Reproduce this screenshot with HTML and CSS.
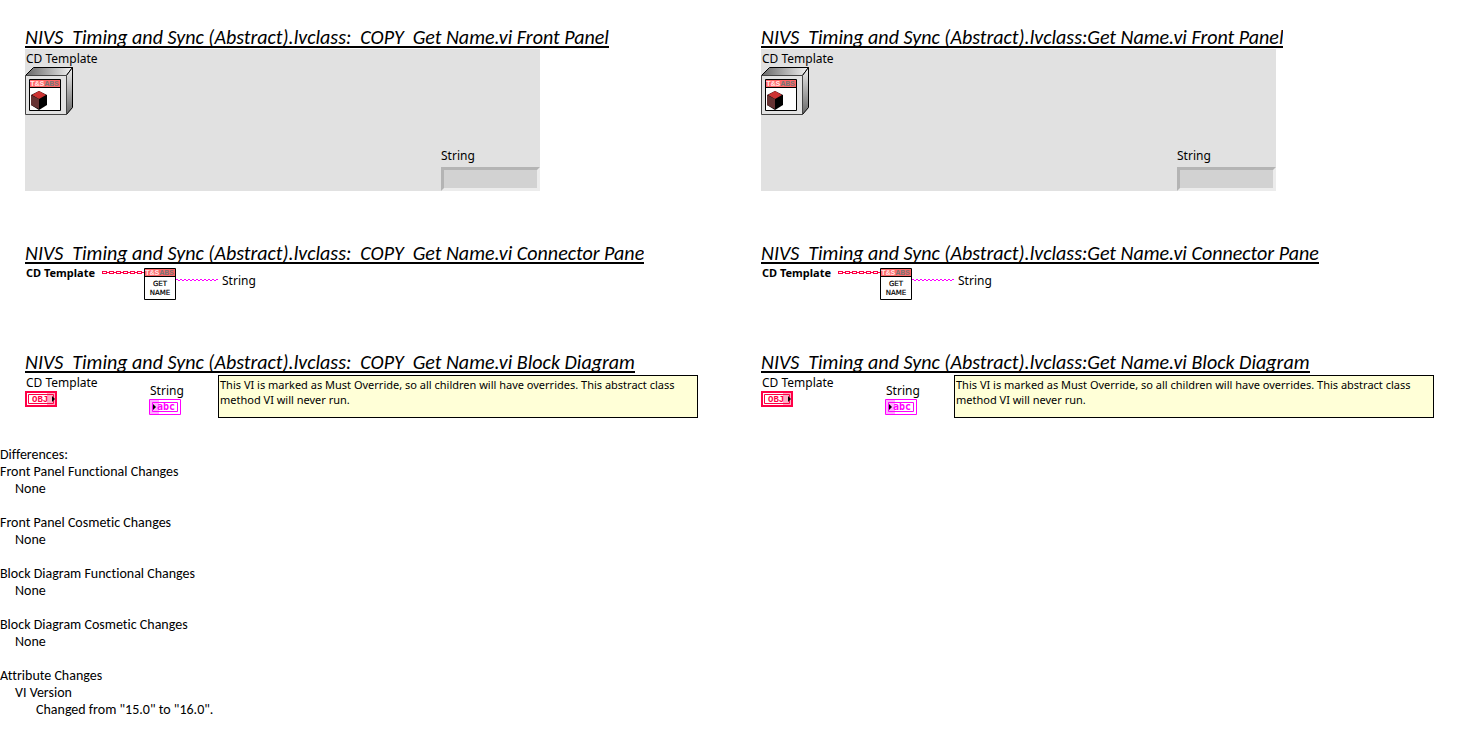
FILE: index.html
```html
<!DOCTYPE html>
<html lang="en">
<head>
<meta charset="utf-8">
<title>VI Comparison Report</title>
<link rel="stylesheet" href="styles.css">
</head>
<body>
<svg class="defs" aria-hidden="true">
  <defs>
    <linearGradient id="top" x1="0" x2="1"><stop offset="0" stop-color="#666"/><stop offset="1" stop-color="#f4f4f4"/></linearGradient>
    <linearGradient id="side" x1="0" y1="0" x2="0" y2="1"><stop offset="0" stop-color="#eee"/><stop offset="1" stop-color="#666"/></linearGradient>
    <pattern id="links" width="7" height="3" patternUnits="userSpaceOnUse"><path d="M0 .5H5M0 2.5H5M.5 0V3M4.5 0V3M5 1.5H7" stroke="#ff0046"/></pattern>
    <pattern id="wave" width="4" height="2" patternUnits="userSpaceOnUse"><path d="M0 .5H2M2 1.5H4" stroke="#ff00ff"/></pattern>
    <symbol id="object" viewBox="0 0 48 48">
      <path d="M.5 8.5 8.5.5H47.5L41.5 8.5Z" fill="url(#top)" stroke="#000"/>
      <path d="M41.5 8.5 47.5.5V40.5L41.5 47.5Z" fill="url(#side)" stroke="#000"/>
      <path d="M.5 8.5H41.5V47.5H.5Z" fill="#e2e2e2" stroke="#444"/>
      <path d="M4.500 12.5H35.500V43.500H4.500Z" fill="#fff" stroke="#000"/>
      <path d="M5 13H35V20H5Z" fill="#ff6666"/>
      <path d="M5 20.500H35" stroke="#000"/>
      <text x="5" y="19" class="pixel-tag">T&amp;S<tspan class="pixel-grey">ABS</tspan></text>
      <path d="M6 28 14 24 22 28V38L14 43 6 38Z" fill="#000"/>
      <path d="M7 28 14 24 21 28 14 32Z" fill="#cc3333"/>
      <path d="M6 28 14 32V42L6 38Z" fill="#663333"/>
    </symbol>
    <symbol id="getname" viewBox="0 0 32 32">
      <path d="M.5.5H31.500V31.500H.5Z" fill="#fff" stroke="#000"/>
      <path d="M1 1H31V8H1Z" fill="#ff6666"/>
      <path d="M1 8.500H31" stroke="#000"/>
      <text x="1" y="7" class="pixel-tag">T&amp;S<tspan class="pixel-grey">ABS</tspan></text>
      <text x="16" y="18" class="pixel-name">GET</text>
      <text x="16" y="27" class="pixel-name">NAME</text>
    </symbol>
    <symbol id="obj" viewBox="0 0 32 16">
      <path d="M1 1H31V15H1Z" fill="#fff" stroke="#ff0046" stroke-width="2"/>
      <path d="M3.500 3.500H28.500V12.500H3.500Z" fill="#fff" stroke="#ff0046"/>
      <text x="7" y="11" class="pixel-obj">OBJ</text>
      <path d="M22 2H30V14H22Z" fill="#ff0046" opacity=".32"/>
      <path d="M27 5V11L30 8Z"/>
    </symbol>
    <symbol id="abc" viewBox="0 0 32 16">
      <path d="M.5.5H31.500V15.500H.5Z" fill="#fff" stroke="#ff00ff"/>
      <path d="M3.500 3.500H28.500V12.500H3.500Z" fill="#fff" stroke="#ff00ff"/>
      <path d="M1 1H10V15H1Z" fill="#ff00ff" opacity=".32"/>
      <path d="M4 5V11L7 8Z"/>
      <text x="8" y="11" class="pixel-abc">abc</text>
    </symbol>
  </defs>
</svg>

<main class="compare">
  <article class="vi">
    <section class="part">
      <h2 class="title">NIVS  Timing and Sync (Abstract).lvclass:  COPY  Get Name.vi Front Panel</h2>
      <div class="panel">
        <div class="control"><span class="label">CD Template</span><svg class="object-icon"><use href="#object"/></svg></div>
        <div class="indicator"><label for="string-a">String</label><input class="field" id="string-a" readonly></div>
      </div>
    </section>
    <section class="part">
      <h2 class="title">NIVS  Timing and Sync (Abstract).lvclass:  COPY  Get Name.vi Connector Pane</h2>
      <div class="connector">
        <b class="terminal">CD Template</b>
        <svg class="wire-in"><rect width="42" height="3" fill="url(#links)"/></svg>
        <svg class="vi-icon"><use href="#getname"/></svg>
        <svg class="wire-out"><rect width="42" height="2" fill="url(#wave)"/></svg>
        <span class="output">String</span>
      </div>
    </section>
    <section class="part">
      <h2 class="title">NIVS  Timing and Sync (Abstract).lvclass:  COPY  Get Name.vi Block Diagram</h2>
      <div class="diagram">
        <div class="node"><span class="label">CD Template</span><svg class="node-icon"><use href="#obj"/></svg></div>
        <div class="node node-string"><span class="label">String</span><svg class="node-icon"><use href="#abc"/></svg></div>
        <p class="note">This VI is marked as Must Override, so all children will have overrides. This abstract class method VI will never run.</p>
      </div>
    </section>
  </article>

  <article class="vi">
    <section class="part">
      <h2 class="title">NIVS  Timing and Sync (Abstract).lvclass:Get Name.vi Front Panel</h2>
      <div class="panel">
        <div class="control"><span class="label">CD Template</span><svg class="object-icon"><use href="#object"/></svg></div>
        <div class="indicator"><label for="string-b">String</label><input class="field" id="string-b" readonly></div>
      </div>
    </section>
    <section class="part">
      <h2 class="title">NIVS  Timing and Sync (Abstract).lvclass:Get Name.vi Connector Pane</h2>
      <div class="connector">
        <b class="terminal">CD Template</b>
        <svg class="wire-in"><rect width="42" height="3" fill="url(#links)"/></svg>
        <svg class="vi-icon"><use href="#getname"/></svg>
        <svg class="wire-out"><rect width="42" height="2" fill="url(#wave)"/></svg>
        <span class="output">String</span>
      </div>
    </section>
    <section class="part">
      <h2 class="title">NIVS  Timing and Sync (Abstract).lvclass:Get Name.vi Block Diagram</h2>
      <div class="diagram">
        <div class="node"><span class="label">CD Template</span><svg class="node-icon"><use href="#obj"/></svg></div>
        <div class="node node-string"><span class="label">String</span><svg class="node-icon"><use href="#abc"/></svg></div>
        <p class="note">This VI is marked as Must Override, so all children will have overrides. This abstract class method VI will never run.</p>
      </div>
    </section>
  </article>
</main>

<section class="differences">
  <h2 class="heading">Differences:</h2>
  <dl class="change"><dt>Front Panel Functional Changes</dt><dd>None</dd></dl>
  <dl class="change"><dt>Front Panel Cosmetic Changes</dt><dd>None</dd></dl>
  <dl class="change"><dt>Block Diagram Functional Changes</dt><dd>None</dd></dl>
  <dl class="change"><dt>Block Diagram Cosmetic Changes</dt><dd>None</dd></dl>
  <dl class="change"><dt>Attribute Changes</dt><dd>VI Version<p class="detail">Changed from "15.0" to "16.0".</p></dd></dl>
</section>
</body>
</html>
```
FILE: styles.css
```css
* { box-sizing: border-box; }
body { margin: 0; background: #fff; color: #000; font: 12px/16px "Noto Sans", sans-serif; }
h2, p, dl, dd { margin: 0; }
svg { display: block; flex: none; }
.defs { position: absolute; width: 0; height: 0; }

.compare { display: grid; grid-template-columns: 1fr 1fr; padding-top: 26px; }
.vi { display: flex; flex-direction: column; gap: 51px; padding-left: 25px; min-width: 0; }
.title {
  width: fit-content; height: 22px; overflow: hidden; white-space: pre;
  border-bottom: 2px solid #000;
  font: italic 20px/22px Carlito, Lato, sans-serif;
  font-variant-ligatures: none;
}
.label { display: block; padding-left: 1px; }

.panel {
  display: flex; flex-direction: column; justify-content: space-between;
  width: 100%; max-width: 515px; min-height: 142px; margin-top: 1px;
  background: #e1e1e1;
}
.control { padding-top: 2px; }
.object-icon { width: 48px; height: 48px; }
.indicator { width: 99px; align-self: flex-end; }
.field {
  display: block; width: 100%; height: 24px; margin-top: 3px; outline: 0;
  border: 3px solid; border-color: #b4b4b4 #ececec #ececec #b4b4b4;
  background: #d2d2d2;
}

.connector { display: flex; align-items: flex-start; }
.terminal { width: 77px; margin-top: 1px; padding-left: 1px; white-space: nowrap; font-size: 11px; }
.wire-in { width: 42px; height: 3px; margin-top: 7px; }
.vi-icon { width: 32px; height: 32px; margin-top: 4px; }
.wire-out { width: 42px; height: 2px; margin-top: 15px; }
.output { margin: 9px 0 0 4px; }

.diagram { display: flex; align-items: flex-start; padding-top: 2px; }
.node { width: 124px; }
.node-string { width: 69px; padding-top: 8px; }
.node-icon { width: 32px; height: 16px; }
.note {
  width: 480px; min-height: 43px; padding: 1px;
  border: 1px solid #000; background: #ffffd7; font-size: 11px; line-height: 15px;
}

.differences { padding-top: 28px; font: 14px/17px Carlito, "Open Sans", sans-serif; font-variant-ligatures: none; }
.heading { font: inherit; }
.change { padding-bottom: 17px; }
.change dd { padding-left: 15px; }
.detail { padding-left: 21px; }

.pixel-tag { font: bold 8px "Liberation Mono", monospace; fill: #ffe6e6; }
.pixel-grey { fill: #777; }
.pixel-name { font: 7px "DejaVu Sans", sans-serif; text-anchor: middle; stroke: #000; stroke-width: .2px; }
.pixel-obj { font: bold 9px "Liberation Mono", monospace; fill: #ff0046; }
.pixel-abc { font: bold 10px "DejaVu Sans Mono", monospace; fill: #ff00ff; }
```
